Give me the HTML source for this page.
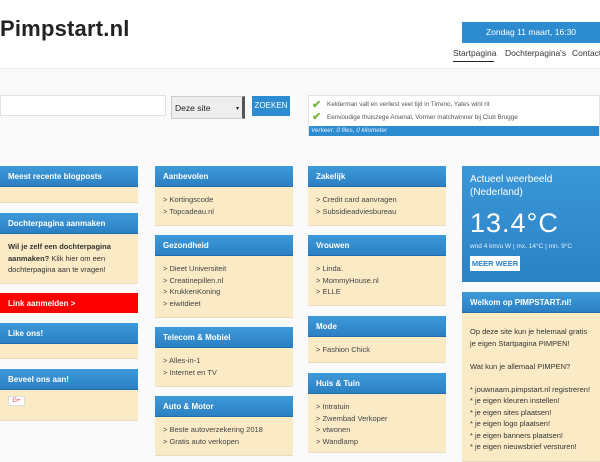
<!DOCTYPE html>
<html><head><meta charset="utf-8"><style>
*{margin:0;padding:0;box-sizing:border-box}
body{width:600px;height:450px;overflow:hidden;background:#fafafa;font-family:"Liberation Sans",sans-serif;position:relative;font-size:8px;color:#333}
.abs{position:absolute}
.top{position:absolute;left:0;top:0;width:600px;height:69px;background:#fff;border-bottom:1px solid #ececec}
.logo{left:0;top:16px;font-size:22px;font-weight:bold;color:#222;letter-spacing:0.2px}
.date{left:462px;top:22px;width:138px;height:21px;background:#2d8bd0;color:#fff;font-size:8.5px;text-align:center;line-height:21px}
.nav{top:48px;font-size:8.5px;color:#333}
.box{position:absolute;width:138px;background:#fbeac6;border-bottom:1px solid #eadcc0}
.box h3{height:21px;background:linear-gradient(#3e9ad9,#2b80c3);color:#fff;font-size:8px;font-weight:bold;padding:6px 8px 0;border-bottom:1px solid #1f6ea8}
.box ul{list-style:none;padding:7px 8px;font-size:7.5px;line-height:11.5px;color:#444}
.box p{padding:7px 8px;font-size:7.5px;line-height:11.5px;color:#333}
</style></head><body>
<div class="top"></div>
<div class="abs logo">Pimpstart.nl</div>
<div class="abs date">Zondag 11 maart, 16:30</div>
<div class="abs nav" style="left:453px">Startpagina</div>
<div class="abs" style="left:453px;top:61px;width:41px;height:1px;background:#222"></div>
<div class="abs nav" style="left:505px">Dochterpagina's</div>
<div class="abs nav" style="left:572px">Contact</div>

<div class="abs" style="left:0;top:95px;width:166px;height:21px;background:#fff;border:1px solid #e2e2e2"></div>
<div class="abs" style="left:171px;top:96px;width:74px;height:23px;background:#eee;border:1px solid #ccc;border-right:3px solid #555;font-size:8.5px;padding:6px 0 0 3px;color:#222">Deze site<span style="position:absolute;right:3px;top:8px;font-size:6px">▾</span></div>
<div class="abs" style="left:252px;top:96px;width:38px;height:20px;background:#2d8bd0;color:#fff;font-size:8px;text-align:center;line-height:20px">ZOEKEN</div>

<div class="abs" style="left:308px;top:95px;width:292px;height:41px;background:#fff;border:1px solid #e2e2e2">
<div style="position:absolute;left:3px;top:2px;color:#7cb342;font-size:11px;font-weight:bold">✔</div>
<div style="position:absolute;left:18px;top:5px;font-size:6.3px;color:#555">Kelderman valt en verliest veel tijd in Tirreno, Yates wint rit</div>
<div style="position:absolute;left:3px;top:14px;color:#7cb342;font-size:11px;font-weight:bold">✔</div>
<div style="position:absolute;left:18px;top:18px;font-size:6.3px;color:#555">Eenvoudige thuiszege Arsenal, Vormer matchwinner bij Club Brugge</div>
<div style="position:absolute;left:0;top:30px;width:290px;height:10px;background:#2d8bd0;color:#e8f2fb;font-size:6.3px;font-style:italic;padding:1px 2px">Verkeer: 0 files, 0 kilometer</div>
</div>

<div class="box" style="left:0;top:166px;height:37px"><h3>Meest recente blogposts</h3></div>
<div class="box" style="left:0;top:213px;height:71px"><h3>Dochterpagina aanmaken</h3><p><b>Wil je zelf een dochterpagina aanmaken?</b> Klik hier om een dochterpagina aan te vragen!</p></div>
<div class="abs" style="left:0;top:293px;width:138px;height:20px;background:#f00;color:#fff;font-size:8px;font-weight:bold;padding:6px 8px">Link aanmelden &gt;</div>
<div class="box" style="left:0;top:323px;height:36px"><h3>Like ons!</h3></div>
<div class="box" style="left:0;top:369px;height:52px"><h3>Beveel ons aan!</h3><div style="margin:6px 0 0 8px;width:17px;height:10px;background:#fff;border:1px solid #ddd;color:#d34;font-size:6px;text-align:center;line-height:9px">G+</div></div>

<div class="box" style="left:155px;top:166px;height:60px"><h3>Aanbevolen</h3><ul><li>&gt; Kortingscode</li><li>&gt; Topcadeau.nl</li></ul></div>
<div class="box" style="left:155px;top:235px;height:83px"><h3>Gezondheid</h3><ul><li>&gt; Dieet Universiteit</li><li>&gt; Creatinepillen.nl</li><li>&gt; KrukkenKoning</li><li>&gt; eiwitdieet</li></ul></div>
<div class="box" style="left:155px;top:327px;height:60px"><h3>Telecom &amp; Mobiel</h3><ul><li>&gt; Alles-in-1</li><li>&gt; Internet en TV</li></ul></div>
<div class="box" style="left:155px;top:396px;height:60px"><h3>Auto &amp; Motor</h3><ul><li>&gt; Beste autoverzekering 2018</li><li>&gt; Gratis auto verkopen</li></ul></div>

<div class="box" style="left:308px;top:166px;height:60px"><h3>Zakelijk</h3><ul><li>&gt; Credit card aanvragen</li><li>&gt; Subsidieadviesbureau</li></ul></div>
<div class="box" style="left:308px;top:235px;height:71px"><h3>Vrouwen</h3><ul><li>&gt; Linda.</li><li>&gt; MommyHouse.nl</li><li>&gt; ELLE</li></ul></div>
<div class="box" style="left:308px;top:316px;height:47px"><h3>Mode</h3><ul><li>&gt; Fashion Chick</li></ul></div>
<div class="box" style="left:308px;top:373px;height:80px"><h3>Huis &amp; Tuin</h3><ul><li>&gt; Intratuin</li><li>&gt; Zwembad Verkoper</li><li>&gt; vtwonen</li><li>&gt; Wandlamp</li></ul></div>

<div class="abs" style="left:462px;top:166px;width:138px;height:116px;background:linear-gradient(#3a97d8,#2b82c5);color:#fff;padding:7px 8px">
<div style="font-size:10px;line-height:13px">Actueel weerbeeld (Nederland)</div>
<div style="font-size:27px;margin-top:8px;line-height:32px;letter-spacing:1px">13.4°C</div>
<div style="font-size:6.5px;margin-top:4px;color:#e4f0fa">wnd 4 km/u W | mx. 14°C | mn. 9°C</div>
<div style="margin-top:6px;width:50px;height:15px;background:#fff;color:#2b80c3;font-size:7.5px;font-weight:bold;text-align:center;line-height:15px">MEER WEER</div>
</div>
<div class="box" style="left:462px;top:292px;height:170px"><h3>Welkom op PIMPSTART.nl!</h3><p style="padding-top:13px;line-height:11.5px">Op deze site kun je helemaal gratis je eigen Startpagina PIMPEN!<br><br>Wat kun je allemaal PIMPEN?<br><br>* jouwnaam.pimpstart.nl registreren!<br>* je eigen kleuren instellen!<br>* je eigen sites plaatsen!<br>* je eigen logo plaatsen!<br>* je eigen banners plaatsen!<br>* je eigen nieuwsbrief versturen!</p></div>
</body></html>
